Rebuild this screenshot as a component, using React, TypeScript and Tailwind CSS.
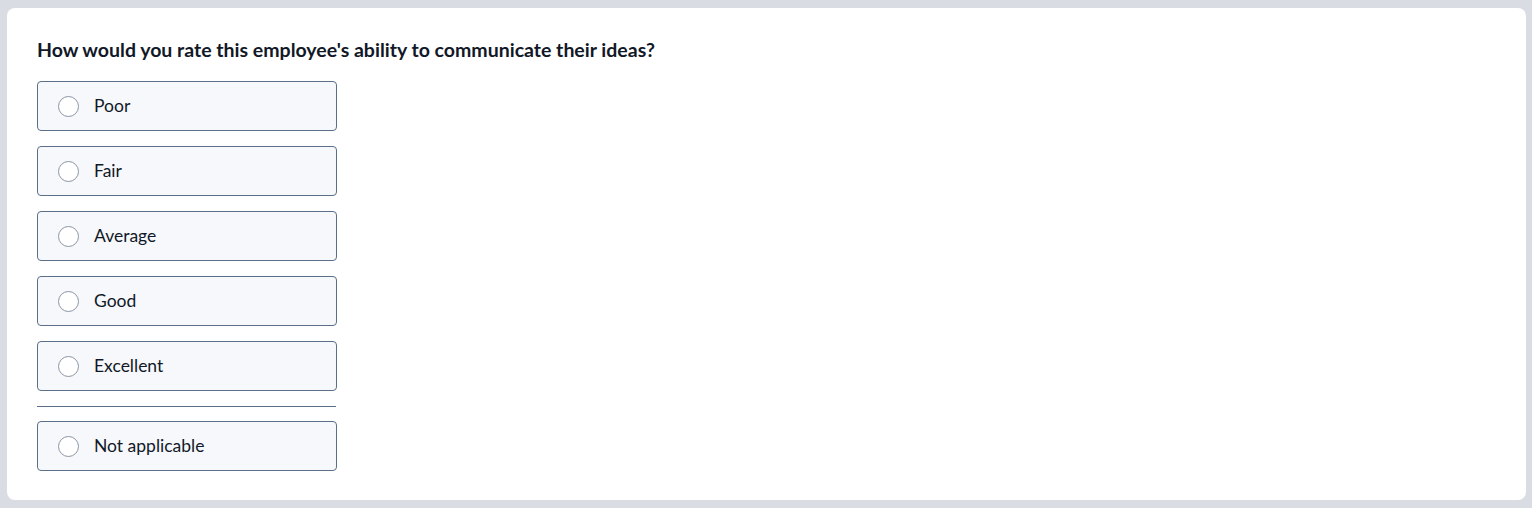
const options = ["Poor", "Fair", "Average", "Good", "Excellent"];

function Option({ label }: { label: string }) {
  return (
    <label className="flex h-[50px] w-[300px] cursor-pointer items-center rounded-[4px] border border-[#5b6f86] bg-[#f7f8fc] pl-[20px]">
      <span className="h-[21px] w-[21px] shrink-0 rounded-full border border-[#8b95a3] bg-white" />
      <span className="ml-[15px] text-[17.5px] text-[#111827]">{label}</span>
    </label>
  );
}

export default function App() {
  return (
    <div
      className="h-[508px] w-[1532px] bg-[#d9dce3] pb-[8px] pl-[7px] pr-[6px] pt-[8px]"
      style={{ fontFamily: "Lato, 'Open Sans', sans-serif" }}
    >
      <div className="h-full rounded-[8px] bg-white px-[30px] pt-[29px]">
        <h2 className="text-[19.5px] font-bold leading-[26px] text-[#111827]">
          How would you rate this employee's ability to communicate their ideas?
        </h2>
        <div className="mt-[18px] flex flex-col gap-[15px]">
          {options.map((o) => (
            <Option key={o} label={o} />
          ))}
        </div>
        <div className="mb-[14px] mt-[15px] h-px w-[299px] bg-[#5b6f86]" />
        <Option label="Not applicable" />
      </div>
    </div>
  );
}
